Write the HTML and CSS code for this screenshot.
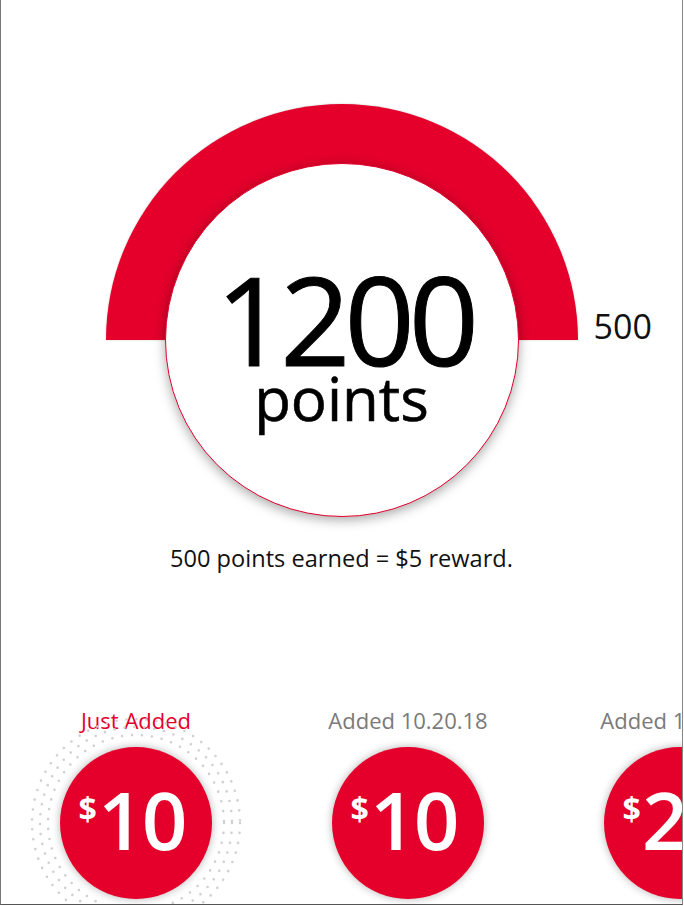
FILE: index.html
```html
<!DOCTYPE html>
<html lang="en">
<head>
<meta charset="utf-8">
<title>Rewards</title>
<link rel="stylesheet" href="styles.css">
</head>
<body>
<div class="frame">
  <section class="gauge">
    <div class="arc"></div>
    <div class="max-label">500</div>
    <div class="dial">
      <div class="dial-value">1200</div>
      <div class="dial-unit">points</div>
    </div>
  </section>
  <p class="caption">500 points earned = $5 reward.</p>
  <section class="coupons">
    <div class="coupon">
      <div class="coupon-label coupon-label--new">Just Added</div>
      <div class="coupon-disc-wrap">
        <svg class="rings" width="220" height="220" viewBox="0 0 220 220" aria-hidden="true">
          <circle cx="110" cy="110" r="88" />
          <circle cx="110" cy="110" r="96" />
          <circle cx="110" cy="110" r="104" />
        </svg>
        <div class="coupon-disc"><span class="cur">$</span><span class="amt">10</span></div>
      </div>
    </div>
    <div class="coupon">
      <div class="coupon-label">Added 10.20.18</div>
      <div class="coupon-disc-wrap">
        <div class="coupon-disc"><span class="cur">$</span><span class="amt">10</span></div>
      </div>
    </div>
    <div class="coupon">
      <div class="coupon-label">Added 10.20.18</div>
      <div class="coupon-disc-wrap">
        <div class="coupon-disc"><span class="cur">$</span><span class="amt">20</span></div>
      </div>
    </div>
  </section>
</div>
</body>
</html>
```

FILE: styles.css
```css
html, body {
  margin: 0;
  padding: 0;
  background: #fff;
}
body {
  font-family: "Open Sans", "Noto Sans", sans-serif;
  color: #111;
}
.frame {
  box-sizing: border-box;
  width: 683px;
  height: 905px;
  border-left: 1px solid #777;
  border-right: 1px solid #888;
  border-bottom: 1px solid #555;
  overflow: hidden;
  background: #fff;
}

/* gauge */
.gauge {
  display: grid;
  grid-template-columns: 1fr 472px 1fr;
  padding-top: 104px;
}
.arc {
  grid-column: 2;
  grid-row: 1;
  width: 472px;
  height: 236px;
  border-radius: 236px 236px 0 0;
  background: #e4002b;
  box-shadow: 0 0 2px rgba(0, 0, 0, 0.25);
}
.max-label {
  grid-column: 3;
  grid-row: 1;
  align-self: end;
  padding-left: 16px;
  font-size: 34px;
  line-height: 34px;
  margin-bottom: -3px;
  color: #111;
}
.dial {
  grid-column: 2;
  grid-row: 2;
  justify-self: center;
  margin-top: -177px;
  box-sizing: border-box;
  width: 354px;
  height: 354px;
  border-radius: 50%;
  border: 1px solid #e4002b;
  background: #fff;
  box-shadow: 0 3px 12px rgba(0, 0, 0, 0.35);
  display: flex;
  flex-direction: column;
  align-items: center;
  padding-top: 105px;
  color: #000;
}
.dial-value {
  font-size: 123px;
  line-height: 100px;
  letter-spacing: -6px;
  margin-right: -6px;
  -webkit-text-stroke: 1px #000;
}
.dial-unit {
  font-size: 60px;
  line-height: 50px;
  margin-top: 4px;
  -webkit-text-stroke: 0.6px #000;
}

.caption {
  margin: 26px 0 0;
  text-align: center;
  font-size: 23.6px;
  line-height: 30px;
  color: #111;
}

/* coupons */
.coupons {
  display: flex;
  margin-top: 133px;
  margin-left: -1px;
}
.coupon {
  flex: 0 0 272px;
  display: flex;
  flex-direction: column;
  align-items: center;
}
.coupon-label {
  font-size: 22px;
  line-height: 28px;
  color: #7a7a7a;
  white-space: nowrap;
}
.coupon-label--new {
  color: #e4002b;
}
.coupon-disc-wrap {
  position: relative;
  margin-top: 13px;
  width: 152px;
  height: 152px;
}
.rings {
  position: absolute;
  left: -34px;
  top: -34px;
  fill: none;
  stroke: #d0d0d0;
  stroke-width: 2.6;
  stroke-linecap: round;
  stroke-dasharray: 0 10;
}
.coupon-disc {
  position: relative;
  box-sizing: border-box;
  width: 152px;
  height: 152px;
  border-radius: 50%;
  background: #e4002b;
  box-shadow: 0 0 8px rgba(0, 0, 0, 0.3);
  color: #fff;
  display: flex;
  align-items: center;
  justify-content: center;
  padding-right: 8px;
}
.cur {
  font-size: 32px;
  font-weight: 700;
  line-height: 32px;
  align-self: flex-start;
  margin-top: 46px;
  margin-right: 1px;
}
.amt {
  font-size: 80px;
  font-weight: 600;
  line-height: 80px;
  letter-spacing: -2px;
  margin-top: -8px;
}
```
